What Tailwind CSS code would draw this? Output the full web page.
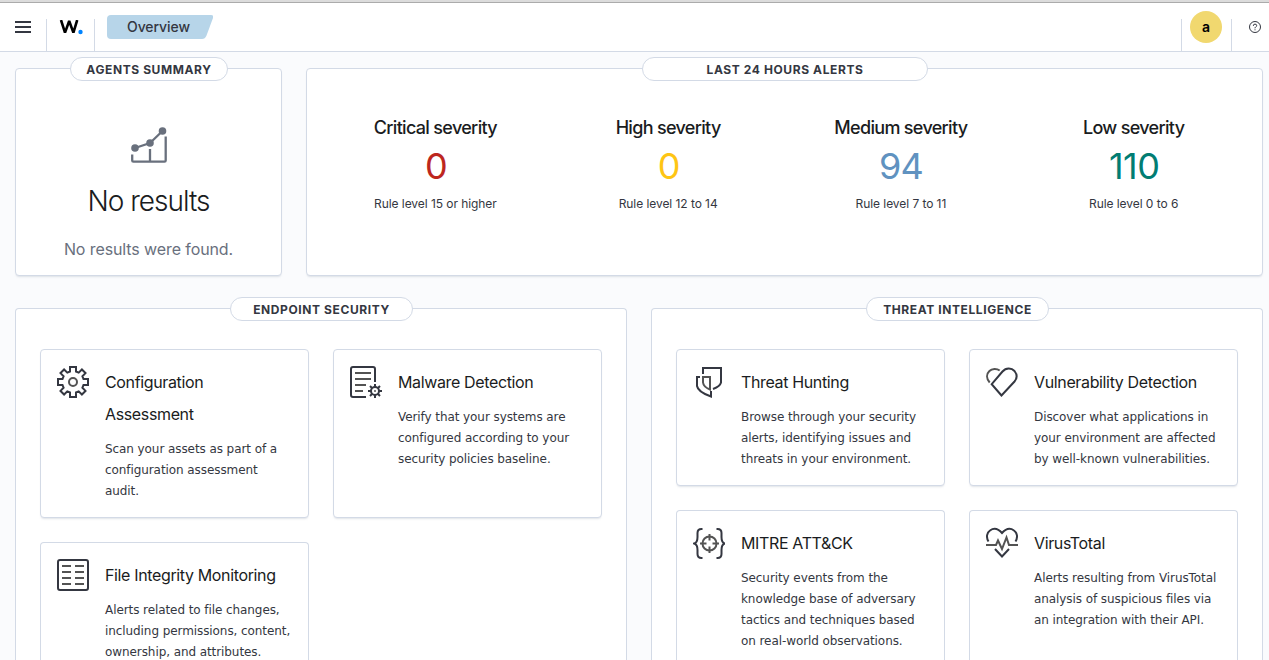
<!DOCTYPE html>
<html lang="en">
<head>
<meta charset="utf-8">
<title>Overview</title>
<script src="https://cdn.jsdelivr.net/npm/@tailwindcss/browser@4"></script>
</head>
<body class="h-[660px] overflow-hidden bg-[#fafbfd] font-['Inter',sans-serif] text-[#343741]">
<div class="h-[3px] border-b border-[#ababab] bg-[#dcdcdc]"></div>
<header class="flex h-[49px] items-stretch border-b border-[#d3dae6] bg-white">
  <button class="flex w-[46px] items-center justify-center" aria-label="Menu">
    <svg class="size-4" viewBox="0 0 16 16" fill="#343741"><path d="M0 2h16v2H0zM0 7h16v2H0zM0 12h16v2H0z"/></svg>
  </button>
  <div class="mt-4 flex w-[49px] items-start justify-center border-x border-[#d3dae6]">
    <svg class="mt-px h-4 w-6" viewBox="0 0 24 16" fill="none"><path d="M2 0 6 12.600 10.200 1 14.400 12.600 18.200 0" stroke="#000" stroke-width="2.600" stroke-linejoin="bevel"/><circle cx="21.500" cy="12" r="2.200" fill="#0084ff"/></svg>
  </div>
  <div class="relative mt-3 ml-3 flex h-6 w-[106px] items-center pb-0.5 pl-5 text-[14px] font-medium tracking-[-0.07px]">
    <svg class="absolute inset-0" width="106" height="24"><path d="M4 0H104Q107 0 106 3L99.500 20.500Q98 24 95 24H4Q0 24 0 20V4Q0 0 4 0Z" fill="#b7d5e9"/></svg>
    <span class="relative">Overview</span>
  </div>
  <div class="ml-auto flex">
    <div class="mt-4 flex w-[51px] border-x border-[#d3dae6] pl-2">
      <span class="-mt-2 flex size-8 items-center justify-center rounded-full bg-[#f1d86f] pb-0.5 text-[14px] font-semibold text-black">a</span>
    </div>
    <div class="flex w-[37px] items-center pl-[17px]">
      <svg class="size-3" viewBox="0 0 12 12" fill="none" stroke="#343741"><circle cx="6" cy="6" r="5.500"/><path d="M4.300 4.900Q4.300 3.100 6 3.100T7.700 4.700Q7.700 5.500 6.700 6 6 6.400 6 7.300M6 8.300V9.300"/></svg>
    </div>
  </div>
</header>

<main class="flex flex-col gap-8 pt-4 pr-1.5 pl-[15px]">
  <div class="flex gap-6">
    <section class="relative flex h-[208px] w-[267px] flex-col items-center rounded border border-[#d3dae6] bg-white shadow-[0_2px_2px_-1px_#98a2b34d]">
      <h2 class="absolute -top-3 flex h-6 w-[158px] items-center justify-center rounded-full border border-[#d3dae6] bg-white pt-0.5 pl-px text-[12px] font-bold tracking-[0.6px]">AGENTS SUMMARY</h2>
      <svg class="mt-[58px] h-[38px] w-9" viewBox="0 0 36 38" fill="none" stroke="#69707d" stroke-width="2.300"><path d="M1.200 27.500V33.500Q1.200 34.700 2.400 34.700H33.500Q34.700 34.700 34.700 33.500V9.500M19 22V35"/><path d="M4 21 19 16 31.500 4"/><g fill="#69707d" stroke="none"><circle cx="4" cy="21" r="3.800"/><circle cx="19" cy="16" r="3.800"/><circle cx="31.500" cy="4" r="3.800"/></g></svg>
      <p class="mt-4 text-[28px] leading-10 font-light tracking-[-1px] text-[#1a1c21]">No results</p>
      <p class="mt-4 text-[16px] leading-6 tracking-[-0.1px] text-[#69707d]">No results were found.</p>
    </section>
    <section class="relative flex h-[208px] flex-1 justify-center rounded border border-[#d3dae6] bg-white px-3 shadow-[0_2px_2px_-1px_#98a2b34d]">
      <h2 class="absolute -top-3 flex h-6 w-[286px] items-center justify-center rounded-full border border-[#d3dae6] bg-white pt-0.5 pl-px text-[12px] font-bold tracking-[0.6px]">LAST 24 HOURS ALERTS</h2>
      <div class="grid flex-1 grid-cols-4 pt-[47px] text-center">
        <div><h3 class="text-[18px] leading-6 font-medium tracking-[-0.68px] text-[#1a1c21]">Critical severity</h3><p class="mt-1.5 pl-px text-[36px] leading-10 tracking-[-0.9px] text-[#bd271e]">0</p><p class="mt-[9px] text-[12px] leading-[18px] tracking-[-0.06px]">Rule level 15 or higher</p></div>
        <div><h3 class="text-[18px] leading-6 font-medium tracking-[-0.68px] text-[#1a1c21]">High severity</h3><p class="mt-1.5 pl-px text-[36px] leading-10 tracking-[-0.9px] text-[#fec514]">0</p><p class="mt-[9px] text-[12px] leading-[18px] tracking-[-0.06px]">Rule level 12 to 14</p></div>
        <div><h3 class="text-[18px] leading-6 font-medium tracking-[-0.68px] text-[#1a1c21]">Medium severity</h3><p class="mt-1.5 text-[36px] leading-10 tracking-[-0.9px] text-[#6092c0]">94</p><p class="mt-[9px] text-[12px] leading-[18px] tracking-[-0.06px]">Rule level 7 to 11</p></div>
        <div><h3 class="text-[18px] leading-6 font-medium tracking-[-0.68px] text-[#1a1c21]">Low severity</h3><p class="mt-1.5 pl-px text-[36px] leading-10 tracking-[-0.5px] text-[#017d73]">110</p><p class="mt-[9px] text-[12px] leading-[18px] tracking-[-0.06px]">Rule level 0 to 6</p></div>
      </div>
    </section>
  </div>

  <div class="grid grid-cols-2 gap-6">
    <section class="relative flex h-[352px] justify-center overflow-visible rounded-t border border-b-0 border-[#d3dae6] bg-white px-6 pt-10">
      <h2 class="absolute -top-3 flex h-6 w-[183px] items-center justify-center rounded-full border border-[#d3dae6] bg-white pt-0.5 pl-px text-[12px] font-bold tracking-[0.6px]">ENDPOINT SECURITY</h2>
      <div class="grid flex-1 auto-rows-min grid-cols-2 gap-6">
        <article class="flex gap-4 rounded border border-[#d3dae6] bg-white p-4 pb-[15px] shadow-[0_2px_2px_-1px_#98a2b34d]">
          <svg class="size-8 shrink-0" viewBox="0 0 32 32" fill="none" stroke="#343741" stroke-width="2"><path d="M13 1H19V5.500L21.700 6.600 24.900 3.500 28.500 7.100 25.400 10.300 26.500 13H31V19H26.500L25.400 21.700 28.500 24.900 24.900 28.500 21.700 25.400 19 26.500V31H13V26.500L10.300 25.400 7.100 28.500 3.500 24.900 6.600 21.700 5.500 19H1V13H5.500L6.600 10.300 3.500 7.100 7.100 3.500 10.300 6.600 13 5.500Z"/><circle cx="16" cy="16" r="4" stroke="#535353"/></svg>
          <div><h3 class="text-[16px] leading-8 tracking-[-0.36px] text-[#1a1c21]">Configuration Assessment</h3><p class="mt-[9px] font-['DejaVu_Sans',sans-serif] text-[12px] leading-[21px] tracking-[-0.08px]">Scan your assets as part of a configuration assessment audit.</p></div>
        </article>
        <article class="flex gap-4 rounded border border-[#d3dae6] bg-white p-4 pb-[15px] shadow-[0_2px_2px_-1px_#98a2b34d]">
          <svg class="size-8 shrink-0" viewBox="0 0 32 32" fill="none" stroke="#343741" stroke-width="2"><path d="M16 31H3Q1 31 1 29V3Q1 1 3 1H23Q25 1 25 3V16"/><path stroke="#535353" d="M5 7H21M5 13H21M5 19H16M5 25H13"/><circle cx="25" cy="25" r="4"/><path d="M25 18V21M25 29V32M18 25H21M29 25H32M20 20 22.200 22.200M27.800 27.800 30 30M30 20 27.800 22.200M22.200 27.800 20 30"/><circle cx="25" cy="25" r="1" fill="#535353" stroke="none"/></svg>
          <div><h3 class="text-[16px] leading-8 tracking-[-0.36px] text-[#1a1c21]">Malware Detection</h3><p class="mt-[9px] font-['DejaVu_Sans',sans-serif] text-[12px] leading-[21px] tracking-[-0.08px]">Verify that your systems are configured according to your security policies baseline.</p></div>
        </article>
        <article class="flex gap-4 rounded-t border border-b-0 border-[#d3dae6] bg-white p-4 pb-0">
          <svg class="size-8 shrink-0" viewBox="0 0 32 32" fill="none" stroke="#343741" stroke-width="2"><rect x="1" y="1" width="30" height="30" rx="2"/><path stroke="#535353" d="M5 7H14M18 7H27M5 13H14M18 13H27M5 19H14M18 19H27M5 25H14M18 25H27"/></svg>
          <div><h3 class="text-[16px] leading-8 tracking-[-0.36px] text-[#1a1c21]">File Integrity Monitoring</h3><p class="mt-[9px] font-['DejaVu_Sans',sans-serif] text-[12px] leading-[21px] tracking-[-0.08px]">Alerts related to file changes, including permissions, content, ownership, and attributes.</p></div>
        </article>
      </div>
    </section>

    <section class="relative flex h-[352px] justify-center rounded-t border border-b-0 border-[#d3dae6] bg-white px-6 pt-10">
      <h2 class="absolute -top-3 flex h-6 w-[183px] items-center justify-center rounded-full border border-[#d3dae6] bg-white pt-0.5 pl-px text-[12px] font-bold tracking-[0.6px]">THREAT INTELLIGENCE</h2>
      <div class="grid flex-1 auto-rows-min grid-cols-2 gap-6">
        <article class="flex gap-4 rounded border border-[#d3dae6] bg-white p-4 pb-[15px] shadow-[0_2px_2px_-1px_#98a2b34d]">
          <svg class="size-8 shrink-0" viewBox="0 0 32 32" fill="none" stroke="#343741" stroke-width="2"><path d="M10 8V2H28V16.500Q27 20.500 20 23M7 11H4V20Q5 26 18 30.500V25"/><path stroke="#535353" d="M10 11H17V23.500Q10.500 21 10 16.500Z"/></svg>
          <div><h3 class="text-[16px] leading-8 tracking-[-0.36px] text-[#1a1c21]">Threat Hunting</h3><p class="mt-[9px] font-['DejaVu_Sans',sans-serif] text-[12px] leading-[21px] tracking-[-0.08px]">Browse through your security alerts, identifying issues and threats in your environment.</p></div>
        </article>
        <article class="flex gap-4 rounded border border-[#d3dae6] bg-white p-4 pb-[15px] shadow-[0_2px_2px_-1px_#98a2b34d]">
          <svg class="size-8 shrink-0" viewBox="0 0 32 32" fill="none" stroke="#343741" stroke-width="2"><path d="M15.500 29.500 5.700 18.200 16.500 5.500C20 1.500 25.500 1.700 28.500 5 31.300 8.500 31 12.500 28.500 15.500Z"/><path stroke="#535353" d="M3.700 16.500C.2 12.500.3 8 3.400 5 6 2.300 10.800 2.200 13.700 4.600"/></svg>
          <div><h3 class="text-[16px] leading-8 tracking-[-0.36px] text-[#1a1c21]">Vulnerability Detection</h3><p class="mt-[9px] font-['DejaVu_Sans',sans-serif] text-[12px] leading-[21px] tracking-[-0.08px]">Discover what applications in your environment are affected by well-known vulnerabilities.</p></div>
        </article>
        <article class="flex h-[150px] gap-4 rounded-t border border-b-0 border-[#d3dae6] bg-white p-4 pb-0">
          <svg class="size-8 shrink-0" viewBox="0 0 32 32" fill="none" stroke="#343741" stroke-width="2"><path d="M9.500 2H8.500Q4.500 2 4.500 6V10Q4.500 15.500 1.300 16.500 4.500 17.500 4.500 23V27Q4.500 31 8.500 31H9.500M23.500 2H24.500Q28.500 2 28.500 6V10Q28.500 15.500 31.700 16.500 28.500 17.500 28.500 23V27Q28.500 31 24.500 31H23.500"/><g stroke="#535353"><circle cx="16.500" cy="16.500" r="7"/><path d="M16.500 7V13.500M16.500 19.500V26M7 16.500H13.500M19.500 16.500H26"/></g></svg>
          <div><h3 class="text-[16px] leading-8 tracking-[-0.36px] text-[#1a1c21]">MITRE ATT&amp;CK</h3><p class="mt-[9px] font-['DejaVu_Sans',sans-serif] text-[12px] leading-[21px] tracking-[-0.08px]">Security events from the knowledge base of adversary tactics and techniques based on real-world observations.</p></div>
        </article>
        <article class="flex h-[150px] gap-4 rounded-t border border-b-0 border-[#d3dae6] bg-white p-4 pb-0">
          <svg class="size-8 shrink-0" viewBox="0 0 32 32" fill="none" stroke="#343741" stroke-width="2"><path d="M2.500 14.500C-.2 10 1 5.500 4 3.500 8 .5 12.500 2 16 6 19.500 2 24 .5 28 3.500 31 5.500 32.200 10 29.500 14.500M9 22 16 29.500 23 22"/><path stroke="#535353" d="M0 18H10L12 13.500 16 22 20.500 10.500 23 18H32"/></svg>
          <div><h3 class="text-[16px] leading-8 tracking-[-0.36px] text-[#1a1c21]">VirusTotal</h3><p class="mt-[9px] font-['DejaVu_Sans',sans-serif] text-[12px] leading-[21px] tracking-[-0.08px]">Alerts resulting from VirusTotal analysis of suspicious files via an integration with their API.</p></div>
        </article>
      </div>
    </section>
  </div>
</main>
</body>
</html>
